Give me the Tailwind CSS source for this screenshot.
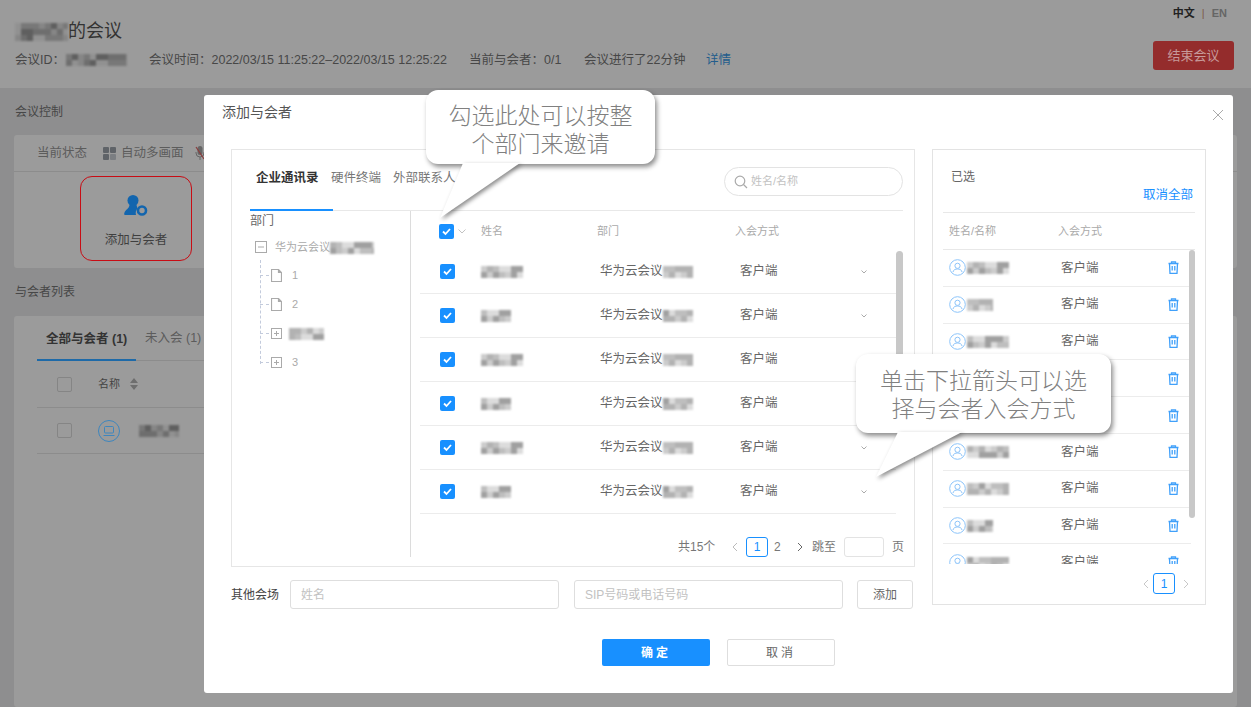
<!DOCTYPE html>
<html lang="zh-CN">
<head>
<meta charset="UTF-8">
<title>添加与会者</title>
<script src="https://cdn.jsdelivr.net/npm/@tailwindcss/browser@4"></script>
</head>
<body class="relative w-[1251px] h-[707px] overflow-hidden bg-[#8e8e8f] font-['Liberation_Sans','Noto_Sans_CJK_SC',sans-serif] text-xs text-[#4d4d4d]">

<!-- page behind the dialog -->
<header class="relative h-[88px] bg-[#9b9b9b] px-[15px] pt-[19px]">
  <div class="flex items-center h-[24px] text-[18px] text-[#333]"><span data-mosaic="53,dark,3"></span>的会议</div>
  <div class="flex items-center h-[20px] mt-[7px] text-[12.5px] text-[#474747] whitespace-nowrap">
    <span class="w-[51px]">会议ID：</span><span class="w-[83px]" data-mosaic="61,dark,2"></span>
    <span class="w-[320px]">会议时间：2022/03/15 11:25:22–2022/03/15 12:25:22</span>
    <span class="w-[115px]">当前与会者：0/1</span>
    <span class="w-[122px]">会议进行了22分钟</span>
    <span class="text-[#235d8c]">详情</span>
  </div>
  <div class="absolute right-[24px] top-[6px] flex items-center text-[11px]"><b class="text-[#222]">中文</b><span class="mx-[7px] text-[#7d5a4a]">|</span><b class="text-[#666]">EN</b></div>
  <button class="absolute left-[1153px] top-[41px] w-[81px] h-[29px] rounded-[3px] bg-[#942c2c] text-[#c79a9a] text-[13px]">结束会议</button>
</header>

<section class="px-[14px]">
  <div class="h-[47px] flex items-center px-px text-[12px] text-[#474747]">会议控制</div>
  <div class="h-[133px] rounded-[3px] bg-[#9b9b9b]">
    <div class="h-[37px] flex items-center pl-[23px] border-b border-[#8c8c8c] text-[12.5px] text-[#5c5c5c]">
      <span class="w-[66px] whitespace-nowrap">当前状态</span>
      <svg class="w-[13px] h-[13px] mr-[5px]" viewBox="0 0 13 13" fill="#5f6368"><rect width="6" height="6" rx="1"/><rect x="7" width="6" height="6" rx="1"/><rect y="7" width="6" height="6" rx="1"/><rect x="7" y="7" width="6" height="6" rx="1" fill="#7b7e82"/></svg>
      <span class="w-[74px] whitespace-nowrap">自动多画面</span>
      <svg class="w-[10px] h-[14px]" viewBox="0 0 10 14"><rect x="2.5" y="0" width="5" height="9" rx="2.5" fill="#666"/><path d="M1 6v1a4 4 0 0 0 8 0V6M5 11v3" stroke="#666" fill="none"/><path d="M1 1l8 12" stroke="#8c3c3c" stroke-width="1.2"/></svg>
    </div>
    <div class="ml-[66px] mt-[4px] w-[112px] h-[85px] rounded-[12px] border-[1.5px] border-[#c80c14] flex flex-col items-center">
      <svg class="mt-[17px] w-[24px] h-[23px]" viewBox="0 0 24 23" fill="#1265ae"><circle cx="9" cy="6.5" r="5.5"/><path d="M5.5 11h7l1 3.5a7 7 0 0 0-1.5 6.5H1c-1 0-1-1-.5-2.5C1.500 15.500 5 15 5.500 11z"/><circle cx="18" cy="16.500" r="4" fill="none" stroke="#1265ae" stroke-width="2.600"/></svg>
      <span class="mt-[15px] text-[12.5px] text-[#3f3f3f] whitespace-nowrap">添加与会者</span>
    </div>
  </div>
  <div class="h-[48px] flex items-center px-px text-[12px] text-[#474747]">与会者列表</div>
  <div class="h-[391px] rounded-[3px] bg-[#9b9b9b] px-[23px]">
    <div class="h-[45px] flex items-end border-b border-[#8c8c8c] text-[12.5px]">
      <span class="w-[99px] h-[45px] pt-[15px] pl-[9px] border-b-2 border-[#1e6aa8] -mb-px font-bold text-[#333] whitespace-nowrap">全部与会者 (1)</span>
      <span class="ml-[9px] h-[45px] pt-[15px] text-[#5c5c5c] whitespace-nowrap">未入会 (1)</span>
    </div>
    <div class="h-[47px] flex items-center pl-[20px] border-b border-[#8c8c8c] text-[#444]">
      <span class="w-[15px] h-[15px] rounded-[2px] border border-[#858585]"></span>
      <span class="ml-[26px] text-[11px]">名称</span>
      <svg class="ml-[10px] w-[8px] h-[12px]" viewBox="0 0 8 12" fill="#6e6e6e"><path d="M4 0l4 5H0zM4 12L0 7h8z"/></svg>
    </div>
    <div class="h-[46px] flex items-center pl-[20px] border-b border-[#8c8c8c]">
      <span class="w-[15px] h-[15px] rounded-[2px] border border-[#858585]"></span>
      <span class="ml-[26px] w-[22px] h-[22px] rounded-full border border-[#3f86bd] flex items-center justify-center">
        <svg class="w-[12px] h-[12px]" viewBox="0 0 12 12" fill="none" stroke="#3f86bd"><rect x="1.500" y="1.500" width="9" height="6.500" rx="1"/><path d="M0.500 10.500h11"/></svg>
      </span>
      <span class="ml-[19px]" data-mosaic="40,dark,2"></span>
    </div>
  </div>
</section>

<!-- dialog -->
<div class="absolute left-[204px] top-[95px] w-[1029px] h-[598px] rounded-[3px] bg-white px-[27px]">
  <div class="h-[54px] -ml-[9px] pt-[8px] text-[14px] text-[#555]">添加与会者</div>
  <svg class="absolute right-[9px] top-[14px] w-[12px] h-[12px]" viewBox="0 0 12 12" stroke="#aaa"><path d="M1 1l10 10M11 1L1 11"/></svg>

  <div class="flex gap-[17px] items-start">
    <div class="w-[684px]">
      <!-- contact picker -->
      <div class="h-[418px] border border-[#e6e6e6] pl-[18px] pr-[11px]">
        <div class="h-[61px] flex justify-between items-start border-b border-[#e8e8e8]">
          <div class="flex h-[61px] items-start text-[12.5px] text-[#777]">
            <span class="w-[83px] h-[61px] pt-[20px] pl-[6px] border-b-2 border-[#1890ff] font-bold text-[#333] whitespace-nowrap">企业通讯录</span>
            <span class="pt-[20px] w-[62px] whitespace-nowrap -ml-[2px]">硬件终端</span>
            <span class="pt-[20px] whitespace-nowrap">外部联系人</span>
          </div>
          <div class="mt-[17px] w-[179px] h-[29px] rounded-full border border-[#e3e3e3] flex items-center pl-[9px] text-[11px] text-[#c2c2c2]">
            <svg class="w-[14px] h-[14px] mr-[3px]" viewBox="0 0 14 14" fill="none" stroke="#aaa" stroke-width="1.200"><circle cx="6" cy="6" r="4.800"/><path d="M9.500 9.500L13 13"/></svg>姓名/名称
          </div>
        </div>
        <div class="flex">
          <div class="w-[161px] h-[346px] border-r border-[#dcdcdc] text-[#8a8a8a]">
            <div class="h-[19px] flex items-center text-[12px] text-[#666]">部门</div>
            <div class="relative pl-[5px] text-[11px] text-[#aaa]">
              <div class="flex items-center h-[28px] mt-[3px] whitespace-nowrap">
                <svg class="w-[12px] h-[12px] mr-[8px]" viewBox="0 0 12 12" fill="none" stroke="#aaa"><rect x=".5" y=".5" width="11" height="11"/><path d="M3 6h6"/></svg>华为云会议<span data-mosaic="44,light,2"></span>
              </div>
              <span class="absolute left-[10px] top-[27px] h-[104px] border-l border-dashed border-[#c3cbdc]"></span>
              <div class="flex items-center h-[29px] pl-[5px]">
                <span class="w-[9px] border-t border-dashed border-[#c3cbdc] mr-[2px]"></span>
                <svg class="w-[11px] h-[13px] mr-[10px]" viewBox="0 0 11 13" fill="none" stroke="#aaa" stroke-width="1.200"><path d="M.5.5h7l3 3v9H.5zM7.500.5v3h3"/></svg>1
              </div>
              <div class="flex items-center h-[29px] pl-[5px]">
                <span class="w-[9px] border-t border-dashed border-[#c3cbdc] mr-[2px]"></span>
                <svg class="w-[11px] h-[13px] mr-[10px]" viewBox="0 0 11 13" fill="none" stroke="#aaa" stroke-width="1.200"><path d="M.5.5h7l3 3v9H.5zM7.500.5v3h3"/></svg>2
              </div>
              <div class="flex items-center h-[29px] pl-[5px]">
                <span class="w-[9px] border-t border-dashed border-[#c3cbdc] mr-[2px]"></span>
                <svg class="w-[11px] h-[11px] mr-[7px]" viewBox="0 0 11 11" fill="none" stroke="#aaa"><rect x=".5" y=".5" width="10" height="10"/><path d="M3 5.500h5M5.500 3v5"/></svg><span data-mosaic="35,light,2"></span>
              </div>
              <div class="flex items-center h-[29px] pl-[5px]">
                <span class="w-[9px] border-t border-dashed border-[#c3cbdc] mr-[2px]"></span>
                <svg class="w-[11px] h-[11px] mr-[10px]" viewBox="0 0 11 11" fill="none" stroke="#aaa"><rect x=".5" y=".5" width="10" height="10"/><path d="M3 5.500h5M5.500 3v5"/></svg>3
              </div>
            </div>
          </div>
          <div class="relative w-[492px]">
            <div class="h-[39px] flex items-center pt-[2px] pl-[28px] text-[11px] text-[#aaa]">
              <span class="w-[15px] h-[15px] rounded-[2px] bg-[#1890ff] flex items-center justify-center"><svg class="w-[9px] h-[9px]" viewBox="0 0 9 9" fill="none" stroke="#fff" stroke-width="1.800"><path d="M1 4.500l2.500 2.500L8 2"/></svg></span>
              <svg class="ml-[4px] w-[8px] h-[5px]" viewBox="0 0 8 5" fill="none" stroke="#c2c2c2"><path d="M.5.5L4 4 7.500.5"/></svg>
              <span class="ml-[15px] w-[116px]">姓名</span><span class="w-[138px]">部门</span><span>入会方式</span>
            </div>
            <div id="rows" class="pl-[9px] w-[485px]"></div>
            <span class="absolute left-[485px] top-[40px] w-[7px] h-[150px] rounded-full bg-[#c8c8c8]"></span>
            <div class="absolute left-[267px] top-[326px] h-[20px] flex items-center whitespace-nowrap text-[12px] text-[#777]">
              <span class="w-[53px]">共15个</span>
              <svg class="w-[8px] h-[10px] mr-[7px]" viewBox="0 0 8 10" fill="none" stroke="#bbb"><path d="M6 1L2 5l4 4"/></svg>
              <span class="w-[22px] h-[20px] rounded-[3px] border border-[#1890ff] text-[#1890ff] flex items-center justify-center">1</span>
              <span class="ml-[6px] w-[16px]">2</span>
              <svg class="ml-[6px] w-[8px] h-[10px] mr-[8px]" viewBox="0 0 8 10" fill="none" stroke="#666"><path d="M2 1l4 4-4 4"/></svg>
              <span class="w-[32px]">跳至</span>
              <span class="w-[40px] h-[20px] rounded-[3px] border border-[#e3e3e3]"></span>
              <span class="ml-[8px]">页</span>
            </div>
          </div>
        </div>
      </div>
      <!-- other venue -->
      <div class="flex items-center h-[29px] mt-[13px] text-[12px]">
        <span class="w-[59px] text-[#444] shrink-0 whitespace-nowrap">其他会场</span>
        <span class="w-[269px] h-[29px] rounded-[3px] border border-[#dedede] pl-[10px] flex items-center text-[#c2c2c2]">姓名</span>
        <span class="ml-[15px] w-[269px] h-[29px] rounded-[3px] border border-[#dedede] pl-[10px] flex items-center text-[#c2c2c2]">SIP号码或电话号码</span>
        <span class="ml-[14px] shrink-0 w-[56px] h-[29px] rounded-[3px] border border-[#dedede] flex items-center justify-center text-[#666]">添加</span>
      </div>
    </div>

    <!-- selected list -->
    <div class="w-[274px] h-[456px] border border-[#e3e3e3] px-[10px]">
      <div class="relative h-[63px] border-b border-[#e8e8e8]">
        <span class="absolute left-[8px] top-[19px] text-[12px] text-[#666]">已选</span>
        <span class="absolute right-[2px] top-[37px] text-[12.5px] text-[#1890ff]">取消全部</span>
      </div>
      <div class="h-[37px] flex items-center pl-[6px] border-b border-[#e8e8e8] text-[11px] text-[#aaa]"><span class="w-[109px]">姓名/名称</span><span>入会方式</span></div>
      <div class="relative h-[314px] overflow-hidden"><div id="selected"></div><span class="absolute right-0 top-0 w-[6px] h-[268px] rounded-full bg-[#c8c8c8]"></span></div>
      <div class="flex items-center justify-end h-[39px] pr-[5px]">
        <svg class="w-[8px] h-[10px] mr-[3px]" viewBox="0 0 8 10" fill="none" stroke="#c8c8c8"><path d="M6 1L2 5l4 4"/></svg>
        <span class="w-[22px] h-[21px] rounded-[3px] border border-[#1890ff] text-[#1890ff] flex items-center justify-center">1</span>
        <svg class="ml-[7px] w-[8px] h-[10px]" viewBox="0 0 8 10" fill="none" stroke="#c8c8c8"><path d="M2 1l4 4-4 4"/></svg>
      </div>
    </div>
  </div>

  <div class="absolute left-[398px] top-[544px] flex gap-[17px] text-[12px]">
    <button class="w-[108px] h-[27px] rounded-[2px] bg-[#1890ff] text-white font-bold tracking-[3px]">确定</button>
    <button class="w-[108px] h-[27px] rounded-[2px] border border-[#dedede] text-[#666] tracking-[3px]">取消</button>
  </div>
</div>

<!-- callouts -->
<div class="absolute left-[426px] top-[90px] w-[229px] h-[74px] rounded-[12px] bg-white shadow-[2px_3px_5px_rgba(0,0,0,0.45)] pt-[10px] text-center text-[23px] leading-[28px] font-light text-[#808080] font-['Noto_Sans_CJK_SC',sans-serif]">
  勾选此处可以按整<br>个部门来邀请
  <svg class="absolute left-0 top-0 w-[229px] h-[135px] overflow-visible drop-shadow-[2px_2px_2px_rgba(0,0,0,0.45)]" viewBox="0 0 229 135"><path d="M37 73H94L14 128z" fill="#fff"/></svg>
</div>
<div class="absolute left-[856px] top-[354px] w-[255px] h-[79px] rounded-[12px] bg-white shadow-[2px_3px_5px_rgba(0,0,0,0.45)] pt-[11px] text-center text-[23px] leading-[28px] font-light text-[#808080] font-['Noto_Sans_CJK_SC',sans-serif]">
  单击下拉箭头可以选<br>择与会者入会方式
  <svg class="absolute left-0 top-0 w-[255px] h-[130px] overflow-visible drop-shadow-[2px_2px_2px_rgba(0,0,0,0.45)]" viewBox="0 0 255 130"><path d="M42 78H106L20 123z" fill="#fff"/></svg>
</div>

<script>
  var shades = {
    light: ['bg-[#b2b2b2]', 'bg-[#cccccc]', 'bg-[#a0a0a0]', 'bg-[#dcdcdc]', 'bg-[#bebebe]'],
    dark: ['bg-[#6e6e6e]', 'bg-[#868686]', 'bg-[#787878]', 'bg-[#919191]', 'bg-[#5f5f5f]']
  };
  var seed = 3;
  function mosaic(width, kind, rowCount) {
    var html = '<span class="inline-flex flex-col align-middle blur-[1px]" style="width:' + width + 'px">';
    for (var r = 0; r < rowCount; r++) {
      html += '<span class="flex h-[6px] overflow-hidden">';
      for (var c = 0; c < Math.ceil(width / 6); c++) {
        seed = (seed * 7 + 3) % 23;
        html += '<span class="w-[6px] h-[6px] shrink-0 ' + shades[kind][seed % 5] + '"></span>';
      }
      html += '</span>';
    }
    return html + '</span>';
  }

  var rowsHtml = '';
  for (var i = 0; i < 6; i++) {
    rowsHtml += '<div class="h-[44px] flex items-center border-b border-[#ececec] text-[12.5px] text-[#666]">' +
      '<span class="ml-[20px] w-[15px] h-[15px] rounded-[2px] bg-[#1890ff] flex items-center justify-center"><svg class="w-[9px] h-[9px]" viewBox="0 0 9 9" fill="none" stroke="#fff" stroke-width="1.800"><path d="M1 4.500l2.500 2.500L8 2"/></svg></span>' +
      '<span class="ml-[26px] w-[119px]">' + mosaic(i % 2 ? 30 : 42, 'light', 2) + '</span>' +
      '<span class="w-[140px] flex items-center whitespace-nowrap">华为云会议' + mosaic(30, 'light', 2) + '</span>' +
      '<span class="w-[121px]">客户端</span>' +
      '<svg class="w-[6px] h-[4px]" viewBox="0 0 6 4" fill="none" stroke="#aaa"><path d="M.5.5L3 3 5.500.5"/></svg></div>';
  }
  document.getElementById('rows').innerHTML = rowsHtml;

  var selectedHtml = '';
  for (var j = 0; j < 9; j++) {
    selectedHtml += '<div class="h-[36.800px] flex items-center pl-[6px] border-b border-[#ececec] w-[248px] text-[12.5px] text-[#666]">' +
      '<svg class="w-[17px] h-[17px] shrink-0" viewBox="0 0 17 17" fill="none" stroke="#8cc4fa"><circle cx="8.500" cy="8.500" r="7.800"/><circle cx="8.500" cy="6.800" r="2.600"/><path d="M4 13c.5-2.500 2.500-3 4.500-3s4 .5 4.500 3"/></svg>' +
      '<span class="ml-[1px] w-[94px] shrink-0">' + mosaic(j % 3 == 1 ? 26 : 42, 'light', 2) + '</span>' +
      '<span class="w-[107px] shrink-0">客户端</span>' +
      '<svg class="w-[11px] h-[13px] shrink-0" viewBox="0 0 11 13" fill="none" stroke="#40a0fa" stroke-width="1.300"><path d="M.5 2.500h10M3.500 2.500V.8h4v1.700M1.500 2.500l.5 10h7l.5-10M4.200 5v4.500M6.800 5v4.500"/></svg></div>';
  }
  document.getElementById('selected').innerHTML = selectedHtml;

  document.querySelectorAll('[data-mosaic]').forEach(function (el) {
    var parts = el.getAttribute('data-mosaic').split(',');
    el.innerHTML = mosaic(Number(parts[0]), parts[1], Number(parts[2]));
  });
</script>
</body>
</html>
